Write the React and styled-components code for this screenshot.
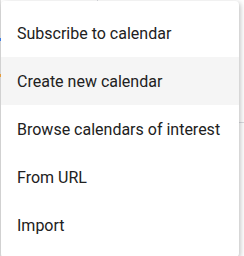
import React from "react";
import styled, { createGlobalStyle } from "styled-components";

const Global = createGlobalStyle`
  html, body { margin: 0; padding: 0; background: #fff; }
  body { width: 244px; height: 256px; overflow: hidden; font-family: Roboto, "Noto Sans", sans-serif; }
`;

const Page = styled.div`
  position: relative;
  width: 244px;
  height: 256px;
  overflow: hidden;
  background: #fff;
`;

const EdgeStrip = styled.div`
  position: absolute;
  left: 0;
  top: 0;
  width: 1px;
  height: 256px;
  background: #e0e0e0;
`;

const Mark = styled.div`
  position: absolute;
  left: 0;
  width: 1px;
  height: 3px;
  top: ${(p) => p.$top}px;
  background: ${(p) => p.$color};
`;

const RuleLine = styled.div`
  position: absolute;
  left: 200px;
  right: 0;
  top: 122px;
  height: 1px;
  background: #dadce0;
`;

const TopTick = styled.div`
  position: absolute;
  left: 97px;
  top: 0;
  width: 1px;
  height: 2px;
  background: #dadce0;
`;

const Menu = styled.ul`
  position: absolute;
  left: 1px;
  top: 1px;
  width: 238px;
  margin: 0;
  padding: 8px 0;
  list-style: none;
  background: #fff;
  border-radius: 4px;
  box-shadow: 1px 2px 4px 0 rgba(0,0,0,0.14), 2px 1px 6px 0 rgba(0,0,0,0.12);
`;

const Item = styled.li`
  height: 48px;
  display: flex;
  align-items: center;
  padding: 0 16px;
  font-size: 16px;
  color: #212121;
  background: ${(p) => (p.$active ? "#f5f5f5" : "transparent")};
  white-space: nowrap;
`;

const items = [
  "Subscribe to calendar",
  "Create new calendar",
  "Browse calendars of interest",
  "From URL",
  "Import",
];

export default function App() {
  return (
    <Page>
      <Global />
      <EdgeStrip />
      <Mark $top={38} $color="#4285f4" />
      <Mark $top={74} $color="#f4a742" />
      <RuleLine />
      <TopTick />
      <Menu>
        {items.map((t, i) => (
          <Item key={t} $active={i === 1}>{t}</Item>
        ))}
      </Menu>
    </Page>
  );
}
